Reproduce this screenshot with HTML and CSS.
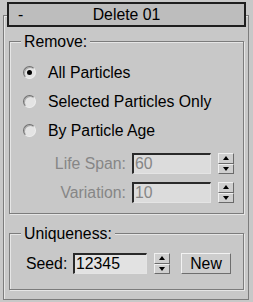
FILE: index.html
```html
<!DOCTYPE html>
<html lang="en">
  <head>
    <meta charset="UTF-8" />
    <title>Delete 01</title>
    <link rel="stylesheet" href="styles.css">
  </head>
  <body>
    <div class="rollout">
      <div class="rollout-title">
        <span class="toggle">-</span>
        <span class="name">Delete 01</span>
      </div>

      <div class="group remove">
        <div class="group-title">Remove:</div>
        <label class="radio-row"><span class="radio checked"></span>All Particles</label>
        <label class="radio-row"><span class="radio"></span>Selected Particles Only</label>
        <label class="radio-row"><span class="radio"></span>By Particle Age</label>

        <div class="field-row disabled">
          <span class="field-label">Life Span:</span>
          <span class="field-input">60</span>
          <span class="spinner"><span class="up"></span><span class="down"></span></span>
        </div>
        <div class="field-row disabled">
          <span class="field-label">Variation:</span>
          <span class="field-input">10</span>
          <span class="spinner"><span class="up"></span><span class="down"></span></span>
        </div>
      </div>

      <div class="group unique">
        <div class="group-title">Uniqueness:</div>
        <div class="seed-row">
          <span class="seed-label">Seed:</span>
          <span class="field-input seed">12345</span>
          <span class="spinner"><span class="up"></span><span class="down"></span></span>
          <button class="new-btn">New</button>
        </div>
      </div>
    </div>
  </body>
</html>
```

FILE: styles.css
```css
body {
  margin: 0;
  background-color: #c8c8c8;
  font-family: "Liberation Sans", Arial, sans-serif;
  font-size: 15.8px;
  color: #000;
  overflow: hidden;
}

.rollout {
  margin: 15px 4px 0 3px;
  height: 285px;
  border: 1px solid #7c7c7c;
  box-sizing: border-box;
  box-shadow: inset 1px 1px 0 #e6e6e6;
}

.rollout-title {
  display: flex;
  align-items: center;
  height: 25px;
  margin: -14px 2px 0 3px;
  border: 2px solid #1e1e1e;
  box-sizing: border-box;
  background-color: #bdbdbd;
}

.rollout-title .toggle {
  width: 20px;
  padding-left: 9px;
}

.rollout-title .name {
  flex: 1;
  text-align: center;
  padding-right: 29px;
}

/* group box: title sits on the top border */
.group {
  margin: 0 4px 0 5px;
  border: 1px solid #7c7c7c;
  box-sizing: border-box;
  box-shadow: 1px 1px 0 #e6e6e6, inset 1px 1px 0 #e6e6e6;
}

.group-title {
  width: fit-content;
  margin: -8px 0 0 11px;
  padding: 0 3px;
  line-height: 15px;
  background-color: #c8c8c8;
}

.remove {
  margin-top: 14px;
  height: 173px;
}

.remove .group-title {
  margin-bottom: 9px;
}

.radio-row {
  display: flex;
  align-items: center;
  height: 29px;
  padding-left: 13px;
}

.radio {
  width: 13px;
  height: 13px;
  box-sizing: border-box;
  border-radius: 50%;
  border: 1px solid;
  border-color: #6e6e6e #eeeeee #eeeeee #6e6e6e;
  background-color: #e4e4e4;
  box-shadow: inset 1px 1px 0 #a8a8a8;
  margin-right: 12px;
  display: flex;
  align-items: center;
  justify-content: center;
}

.radio.checked::after {
  content: "";
  width: 5px;
  height: 5px;
  border-radius: 50%;
  background-color: #000;
}

.field-row {
  display: flex;
  align-items: center;
  height: 21px;
  margin-top: 8px;
  padding-left: 13px;
}

.field-row .field-label {
  width: 103px;
  text-align: right;
  padding-right: 6px;
}

.disabled {
  color: #868686;
}

.field-input {
  width: 79px;
  height: 21px;
  box-sizing: border-box;
  border-style: solid;
  border-width: 2px 1px 1px 2px;
  border-color: #2a2a2a #e4e4e4 #e4e4e4 #2a2a2a;
  background-color: #dcdcdc;
  padding-left: 1px;
  line-height: 18px;
}

.spinner {
  display: flex;
  flex-direction: column;
  width: 16px;
  height: 21px;
  margin-left: 7px;
  box-sizing: border-box;
}

.spinner .up,
.spinner .down {
  flex: 1;
  display: flex;
  align-items: center;
  justify-content: center;
  border: 1px solid;
  border-color: #f0f0f0 #6a6a6a #6a6a6a #f0f0f0;
  background-color: #cfcfcf;
}

.spinner .up::after {
  content: "";
  border-left: 3px solid transparent;
  border-right: 3px solid transparent;
  border-bottom: 4px solid #000;
}

.spinner .down::after {
  content: "";
  border-left: 3px solid transparent;
  border-right: 3px solid transparent;
  border-top: 4px solid #000;
}

.unique {
  margin-top: 19px;
  height: 57px;
}

.unique .group-title {
  margin-bottom: 12px;
}

.seed-row {
  display: flex;
  align-items: center;
  height: 21px;
  padding-left: 16px;
}

.seed-label {
  width: 47px;
}

.field-input.seed {
  width: 74px;
  background-color: #e2e2e2;
}

.new-btn {
  margin-left: 11px;
  width: 50px;
  height: 21px;
  padding: 0;
  font: inherit;
  color: #000;
  background-color: #cdcdcd;
  border: 1px solid;
  border-color: #f2f2f2 #6e6e6e #6e6e6e #f2f2f2;
}
```
